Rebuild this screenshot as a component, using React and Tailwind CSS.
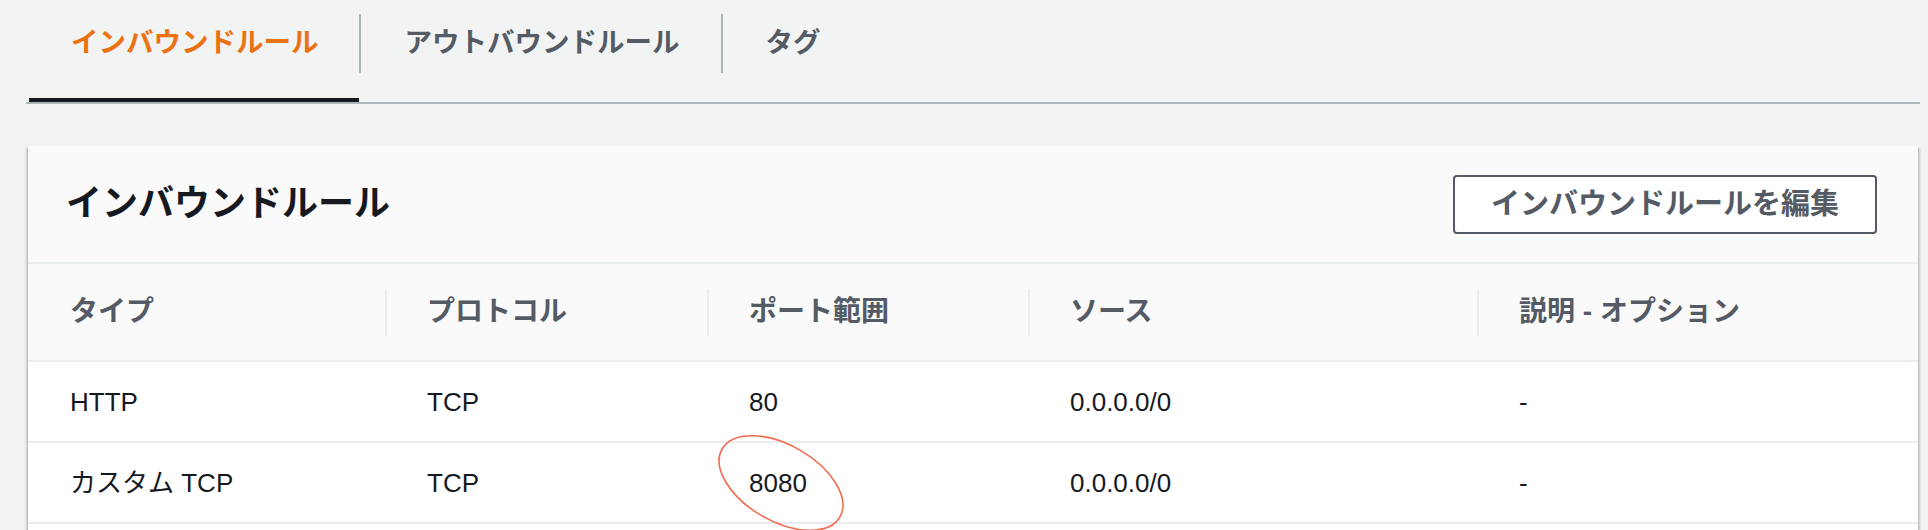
const font = { fontFamily: '"Liberation Sans", "Noto Sans CJK JP", sans-serif' }

const columns = ["タイプ", "プロトコル", "ポート範囲", "ソース", "説明 - オプション"]

const rules = [
    { type: "HTTP", protocol: "TCP", port: "80", source: "0.0.0.0/0", desc: "-" },
    { type: "カスタム TCP", protocol: "TCP", port: "8080", source: "0.0.0.0/0", desc: "-", marked: true },
]

function Tabs() {
    return (
        <div className="flex h-[104px] border-b-2 border-[#aab7b8]">
            <div className="ml-[3px] h-[102px] border-b-4 border-[#16191f] pl-[42px] pr-[40px] pt-[26px] text-[27.5px] font-bold leading-[34px] text-[#ec7211]">
                インバウンドルール
            </div>
            <div className="mt-[14px] h-[59px] w-[2px] bg-[#aab7b8]" />
            <div className="pl-[44px] pr-[41px] pt-[26px] text-[27.5px] font-bold leading-[34px] text-[#545b64]">
                アウトバウンドルール
            </div>
            <div className="mt-[14px] h-[59px] w-[2px] bg-[#aab7b8]" />
            <div className="pl-[43px] pr-[40px] pt-[26px] text-[27.5px] font-bold leading-[34px] text-[#545b64]">
                タグ
            </div>
        </div>
    )
}

// hand-drawn red circle around the port number
function Ellipse() {
    return (
        <svg
            className="pointer-events-none absolute left-0 top-[-44px] overflow-visible"
            width="150"
            height="120"
            viewBox="0 0 150 120"
        >
            <ellipse
                cx="74"
                cy="60"
                rx="68"
                ry="38"
                transform="rotate(30 74 60)"
                fill="none"
                stroke="#f26b50"
                strokeWidth="1.6"
            />
        </svg>
    )
}

export default function App() {
    return (
        <div className="h-[530px] w-full overflow-hidden bg-[#f2f3f3] pl-[26px] pr-[8px]" style={font}>
            <Tabs />
            <div className="mx-[2px] mt-[42px] bg-[#fafafa] shadow-[0_2px_2px_0_rgba(0,28,36,0.3),2px_2px_2px_0_rgba(0,28,36,0.15),-2px_2px_2px_0_rgba(0,28,36,0.15)]">
                <div className="flex h-[118px] items-center justify-between border-b-2 border-[#eaeded] pl-[38px] pr-[41px]">
                    <h2 className="text-[36px] font-bold leading-[44px] text-[#16191f]">インバウンドルール</h2>
                    <button className="h-[59px] w-[424px] rounded-[4px] border-2 border-[#545b64] bg-white text-[29px] font-bold leading-[36px] text-[#545b64]">
                        インバウンドルールを編集
                    </button>
                </div>
                <div className="grid h-[98px] grid-cols-[357px_322px_321px_449px_1fr] items-center border-b-2 border-[#eaeded]">
                    {columns.map((col, i) => (
                        <div key={col} className="flex items-center">
                            {i > 0 && <div className="h-[47px] w-[2px] bg-[#eaeded]" />}
                            <span
                                className={
                                    i > 0
                                        ? "pl-[40px] text-[28px] font-bold leading-[34px] text-[#545b64]"
                                        : "pl-[42px] text-[28px] font-bold leading-[34px] text-[#545b64]"
                                }
                            >
                                {col}
                            </span>
                        </div>
                    ))}
                </div>
                <div className="bg-white pb-[40px]">
                    {rules.map((r) => (
                        <div
                            key={r.type}
                            className="grid h-[81px] grid-cols-[357px_322px_321px_449px_1fr] items-center border-b-2 border-[#eaeded] text-[26px] leading-[32px] text-[#16191f]"
                        >
                            <div className="pl-[42px]">{r.type}</div>
                            <div className="pl-[42px]">{r.protocol}</div>
                            <div className="relative pl-[42px]">
                                {r.port}
                                {r.marked && <Ellipse />}
                            </div>
                            <div className="pl-[42px]">{r.source}</div>
                            <div className="pl-[42px]">{r.desc}</div>
                        </div>
                    ))}
                </div>
            </div>
        </div>
    )
}
